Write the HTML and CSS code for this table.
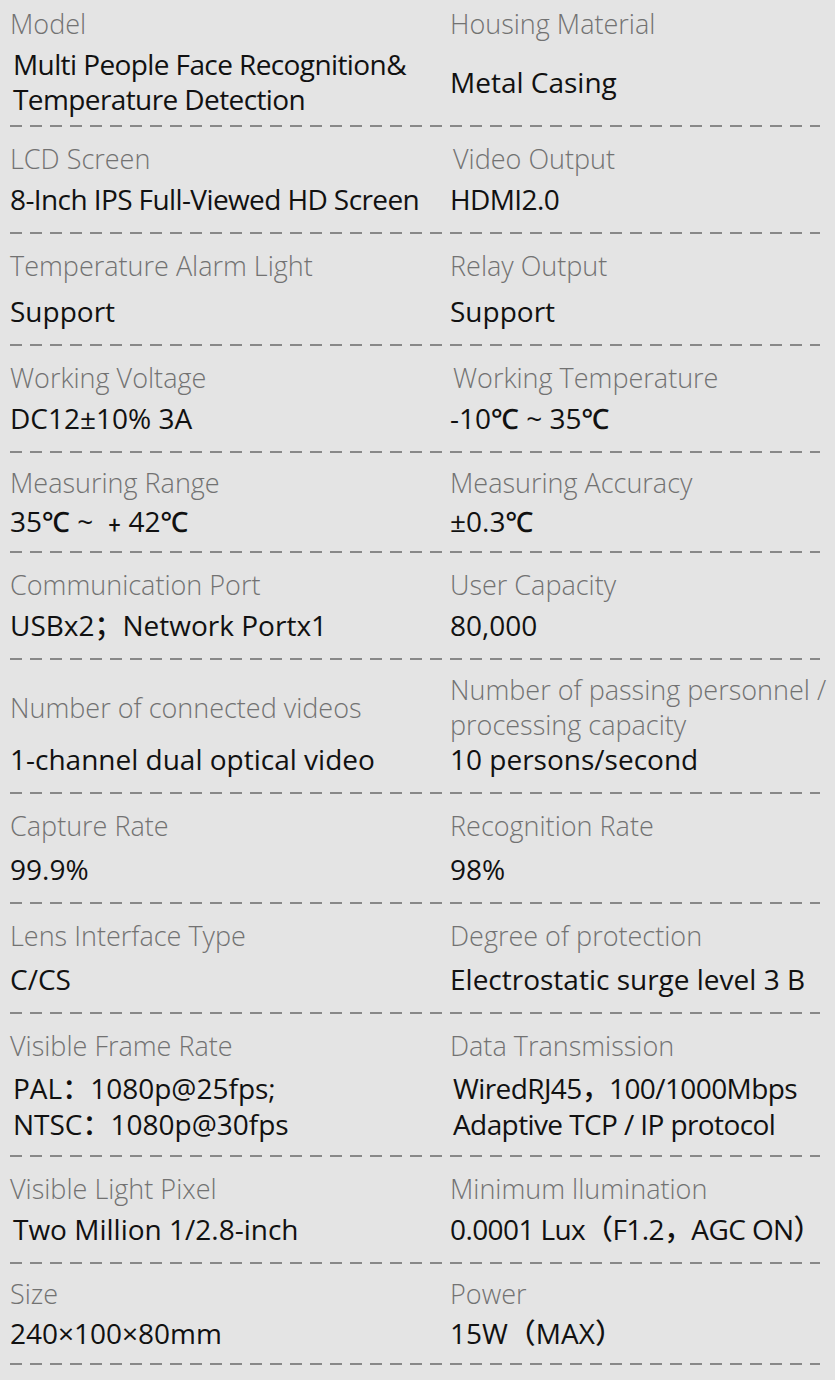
FILE: index.html
```html
<!DOCTYPE html>
<html lang="en">
<head>
<meta charset="utf-8">
<title>Specifications</title>
<link rel="stylesheet" href="styles.css">
</head>
<body>
<main class="specs">
  <section class="row row--first">
    <div class="label">Model</div>
    <div class="label">Housing Material</div>
    <div class="value value--narrow value--indent">Multi People Face Recognition&amp;<br>Temperature Detection</div>
    <div class="value value--mid">Metal Casing</div>
  </section>
  <section class="row">
    <div class="label">LCD Screen</div>
    <div class="label label--indent">Video Output</div>
    <div class="value value--narrow">8-Inch IPS Full-Viewed HD Screen</div>
    <div class="value value--narrow">HDMI2.0</div>
  </section>
  <section class="row row--loose">
    <div class="label">Temperature Alarm Light</div>
    <div class="label">Relay Output</div>
    <div class="value">Support</div>
    <div class="value">Support</div>
  </section>
  <section class="row">
    <div class="label">Working Voltage</div>
    <div class="label label--indent">Working Temperature</div>
    <div class="value">DC12±10% 3A</div>
    <div class="value">-10℃ ~ 35℃</div>
  </section>
  <section class="row row--short">
    <div class="label">Measuring Range</div>
    <div class="label">Measuring Accuracy</div>
    <div class="value">35℃ ~ ﹢42℃</div>
    <div class="value">±0.3℃</div>
  </section>
  <section class="row">
    <div class="label">Communication Port</div>
    <div class="label">User Capacity</div>
    <div class="value">USBx2；Network Portx1</div>
    <div class="value">80,000</div>
  </section>
  <section class="row row--tight">
    <div class="label label--mid">Number of connected videos</div>
    <div class="label">Number of passing personnel /<br>processing capacity</div>
    <div class="value">1-channel dual optical video</div>
    <div class="value">10 persons/second</div>
  </section>
  <section class="row row--roomy">
    <div class="label">Capture Rate</div>
    <div class="label">Recognition Rate</div>
    <div class="value">99.9%</div>
    <div class="value">98%</div>
  </section>
  <section class="row row--roomy">
    <div class="label">Lens Interface Type</div>
    <div class="label">Degree of protection</div>
    <div class="value">C/CS</div>
    <div class="value">Electrostatic surge level 3 B</div>
  </section>
  <section class="row row--double">
    <div class="label">Visible Frame Rate</div>
    <div class="label">Data Transmission</div>
    <div class="value value--two value--indent">PAL：1080p@25fps;<br>NTSC：1080p@30fps</div>
    <div class="value value--two value--narrow value--indent">WiredRJ45，100/1000Mbps<br>Adaptive TCP / IP protocol</div>
  </section>
  <section class="row">
    <div class="label">Visible Light Pixel</div>
    <div class="label">Minimum llumination</div>
    <div class="value value--indent">Two Million 1/2.8-inch</div>
    <div class="value value--narrow">0.0001 Lux（F1.2，AGC ON）</div>
  </section>
  <section class="row row--last">
    <div class="label">Size</div>
    <div class="label">Power</div>
    <div class="value">240×100×80mm</div>
    <div class="value">15W（MAX）</div>
  </section>
</main>
</body>
</html>
```

FILE: styles.css
```css
html, body {
  margin: 0;
  padding: 0;
  background: #e4e4e4;
}

.specs {
  width: 810px;
  margin: 0 0 0 10px;
  display: flex;
  flex-direction: column;
}

.row {
  display: grid;
  grid-template-columns: 440px 1fr;
  grid-template-rows: auto auto;
  row-gap: 6px;
  padding: 14px 0 17px;
  background-image: linear-gradient(to right, #888 0 12px, transparent 12px 20px);
  background-size: 20px 2px;
  background-repeat: repeat-x;
  background-position: left bottom;
}

.row--first {
  padding-top: 6px;
  padding-bottom: 10px;
}

.row--loose {
  row-gap: 11px;
}

.row--short {
  padding-top: 12px;
  row-gap: 4px;
  padding-bottom: 14px;
}

.row--tight {
  padding-top: 12px;
  row-gap: 0;
  padding-bottom: 17px;
}

.row--roomy {
  row-gap: 9px;
}

.row--double {
  row-gap: 7px;
  padding-bottom: 15px;
}

.row--last {
  padding-top: 12px;
  row-gap: 5px;
  padding-bottom: 14px;
}

.label {
  font-family: "Open Sans", "Noto Sans", sans-serif;
  font-weight: 300;
  font-size: 27px;
  line-height: 35px;
  color: #727272;
  align-self: end;
  white-space: nowrap;
}

.label--mid {
  align-self: center;
}

.label--indent {
  padding-left: 3px;
}

.value {
  font-family: "Open Sans", "Noto Sans", "Noto Sans CJK SC", sans-serif;
  font-weight: 500;
  font-size: 28px;
  line-height: 35px;
  color: #111;
  white-space: nowrap;
}

.value--mid {
  align-self: center;
}

.value--indent {
  padding-left: 3px;
}

.value--narrow {
  letter-spacing: -0.6px;
}

.value--two {
  line-height: 36px;
}
```
